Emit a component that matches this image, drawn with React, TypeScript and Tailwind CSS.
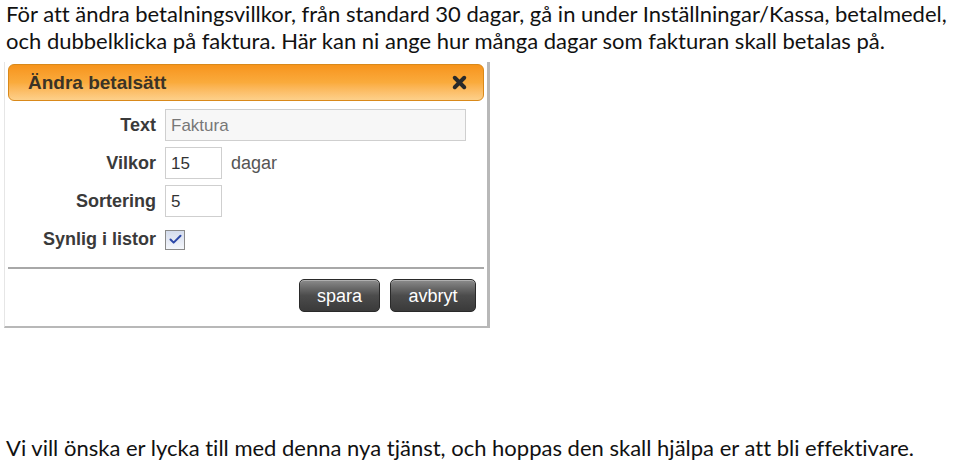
import { Check, X } from "lucide-react";

function Field({ label, children }: { label: string; children: React.ReactNode }) {
  return (
    <div className="flex items-center gap-[9px]">
      <div className="w-[151px] text-right font-bold text-[18px] text-[#3a3a3a]">{label}</div>
      {children}
    </div>
  );
}

function DarkButton({ label, width }: { label: string; width: string }) {
  return (
    <button
      className={`${width} h-[33px] rounded-[5px] border border-[#2a2a2a] bg-gradient-to-b from-[#8c8c8c] via-[#4c4c4c] to-[#3a3a3a] text-white text-[18px] leading-none shadow-[inset_0_1px_0_#b0b0b0]`}
    >
      {label}
    </button>
  );
}

export default function App() {
  return (
    <div className="w-[960px] h-[461px] bg-white text-[#111] font-['Lato','Open_Sans',sans-serif] text-[22px] leading-[27px] [font-variant-ligatures:none] overflow-hidden">
      <p className="pl-[6px] whitespace-nowrap">
        För att ändra betalningsvillkor, från standard 30 dagar, gå in under Inställningar/Kassa, betalmedel,
        <br />
        och dubbelklicka på faktura. Här kan ni ange hur många dagar som fakturan skall betalas på.
      </p>

      <div className="ml-[4px] mt-[8px] w-[486px] h-[266px] border-r-[3px] border-b-[2px] border-l border-[#b8b8b8] border-l-[#e6e6e6] flex flex-col font-['Liberation_Sans',Arial,sans-serif]">
        <div className="mx-[3px] mt-[2px] h-[37px] rounded-[6px] border border-[#d9891a] bg-gradient-to-b from-[#f7941a] via-[#faab3c] to-[#fdd08a] flex items-center justify-between pl-[19px] pr-[14px]">
          <span className="font-bold text-[19px] text-[#3b3326]">Ändra betalsätt</span>
          <X size={19} strokeWidth={5} className="text-[#2a2a2a]" />
        </div>

        <div className="flex flex-col gap-[6px] mt-[8px]">
          <Field label="Text">
            <div className="w-[301px] h-[32px] border border-[#cfcfcf] bg-[#f7f7f7] px-[5px] flex items-center text-[17px] text-[#777]">
              Faktura
            </div>
          </Field>
          <Field label="Vilkor">
            <div className="w-[57px] h-[32px] border border-[#cfcfcf] bg-white px-[5px] flex items-center text-[17px] text-[#333]">
              15
            </div>
            <span className="text-[18px] text-[#555]">dagar</span>
          </Field>
          <Field label="Sortering">
            <div className="w-[57px] h-[32px] border border-[#cfcfcf] bg-white px-[5px] flex items-center text-[17px] text-[#333]">
              5
            </div>
          </Field>
          <div className="mt-[3px]">
            <Field label="Synlig i listor">
              <div className="w-[20px] h-[20px] border border-[#8a8a8a] bg-gradient-to-b from-[#d4dced] to-[#f4f6fb] flex items-center justify-center">
                <Check size={15} strokeWidth={3.2} className="text-[#2c48a8]" />
              </div>
            </Field>
          </div>
        </div>

        <div className="mt-[14px] mx-[3px] border-t-[2px] border-[#a8a8a8]" />

        <div className="flex justify-end gap-[10px] pr-[11px] mt-[10px]">
          <DarkButton label="spara" width="w-[81px]" />
          <DarkButton label="avbryt" width="w-[86px]" />
        </div>
      </div>

      <p className="pl-[6px] mt-[106px] whitespace-nowrap">
        Vi vill önska er lycka till med denna nya tjänst, och hoppas den skall hjälpa er att bli effektivare.
      </p>
    </div>
  );
}
